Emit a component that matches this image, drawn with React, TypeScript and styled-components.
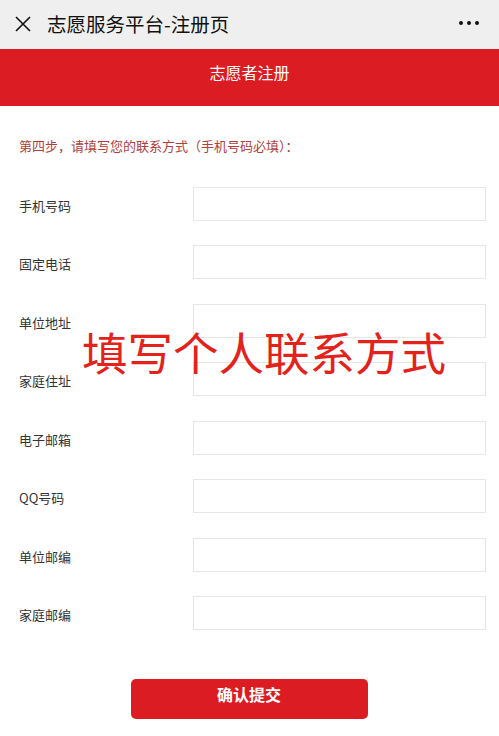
import React from "react";
import styled, { createGlobalStyle } from "styled-components";

const Global = createGlobalStyle`
  html, body { margin: 0; padding: 0; background: #ffffff; }
  body { font-family: "Noto Sans CJK SC", "Noto Sans", sans-serif; }
  * { box-sizing: border-box; }
`;

const Page = styled.div`
  width: 499px;
  min-height: 736px;
  background: #fff;
  position: relative;
`;

const NavBar = styled.div`
  height: 49px;
  background: #efefef;
  display: flex;
  align-items: center;
  padding: 0 20px 0 15px;
`;

const NavTitle = styled.div`
  flex: 1;
  margin-left: 16px;
  font-size: 19.5px;
  color: #111;
  line-height: 1;
  margin-top: -1px;
`;

const Dots = styled.div`
  display: flex;
  gap: 4px;
  margin-top: -3px;
  span {
    width: 4px;
    height: 4px;
    border-radius: 50%;
    background: #111;
  }
`;

const Header = styled.div`
  height: 57px;
  background: #dc1c23;
  color: #fff;
  font-size: 16px;
  display: flex;
  align-items: center;
  justify-content: center;
  padding-bottom: 12px;
`;

const Step = styled.div`
  margin: 30px 0 0 19px;
  height: 38.75px;
  font-size: 13px;
  line-height: 20px;
  color: #b0403d;
`;

const Form = styled.div`
  position: relative;
  display: flex;
  flex-direction: column;
`;

const Row = styled.div`
  height: 58.5px;
  display: flex;
  align-items: center;
  padding: 0 13px 0 19px;
`;

const Label = styled.div`
  width: 174px;
  font-size: 13px;
  color: #333;
  padding-top: 2px;
`;

const Input = styled.div`
  flex: 1;
  height: 34px;
  border: 1px solid #e6e6e6;
  background: #fff;
  margin-top: -1px;
`;

const Overlay = styled.div`
  position: absolute;
  left: 82px;
  top: 154px;
  font-size: 45.5px;
  line-height: 1;
  color: #e3221c;
  white-space: nowrap;
`;

const Footer = styled.div`
  display: flex;
  justify-content: center;
  padding: 36px 0 18px;
  padding-right: 1px;
`;

const Button = styled.div`
  width: 237px;
  height: 40px;
  border-radius: 5px;
  background: #dc1c23;
  color: #fff;
  font-weight: bold;
  font-size: 16px;
  display: flex;
  align-items: center;
  justify-content: center;
  padding-bottom: 10px;
`;

const labels = ["手机号码", "固定电话", "单位地址", "家庭住址", "电子邮箱", "QQ号码", "单位邮编", "家庭邮编"];

export default function App() {
  return (
    <Page>
      <Global />
      <NavBar>
        <svg width="16" height="16" viewBox="0 0 16 16" style={{ marginTop: -1 }}>
          <path d="M1 1 L15 15 M15 1 L1 15" stroke="#111" strokeWidth="1.6" fill="none" />
        </svg>
        <NavTitle>志愿服务平台-注册页</NavTitle>
        <Dots>
          <span />
          <span />
          <span />
        </Dots>
      </NavBar>
      <Header>志愿者注册</Header>
      <Step>第四步，请填写您的联系方式（手机号码必填）：</Step>
      <Form>
        {labels.map((l) => (
          <Row key={l}>
            <Label>{l}</Label>
            <Input />
          </Row>
        ))}
        <Overlay>填写个人联系方式</Overlay>
      </Form>
      <Footer>
        <Button>确认提交</Button>
      </Footer>
    </Page>
  );
}
